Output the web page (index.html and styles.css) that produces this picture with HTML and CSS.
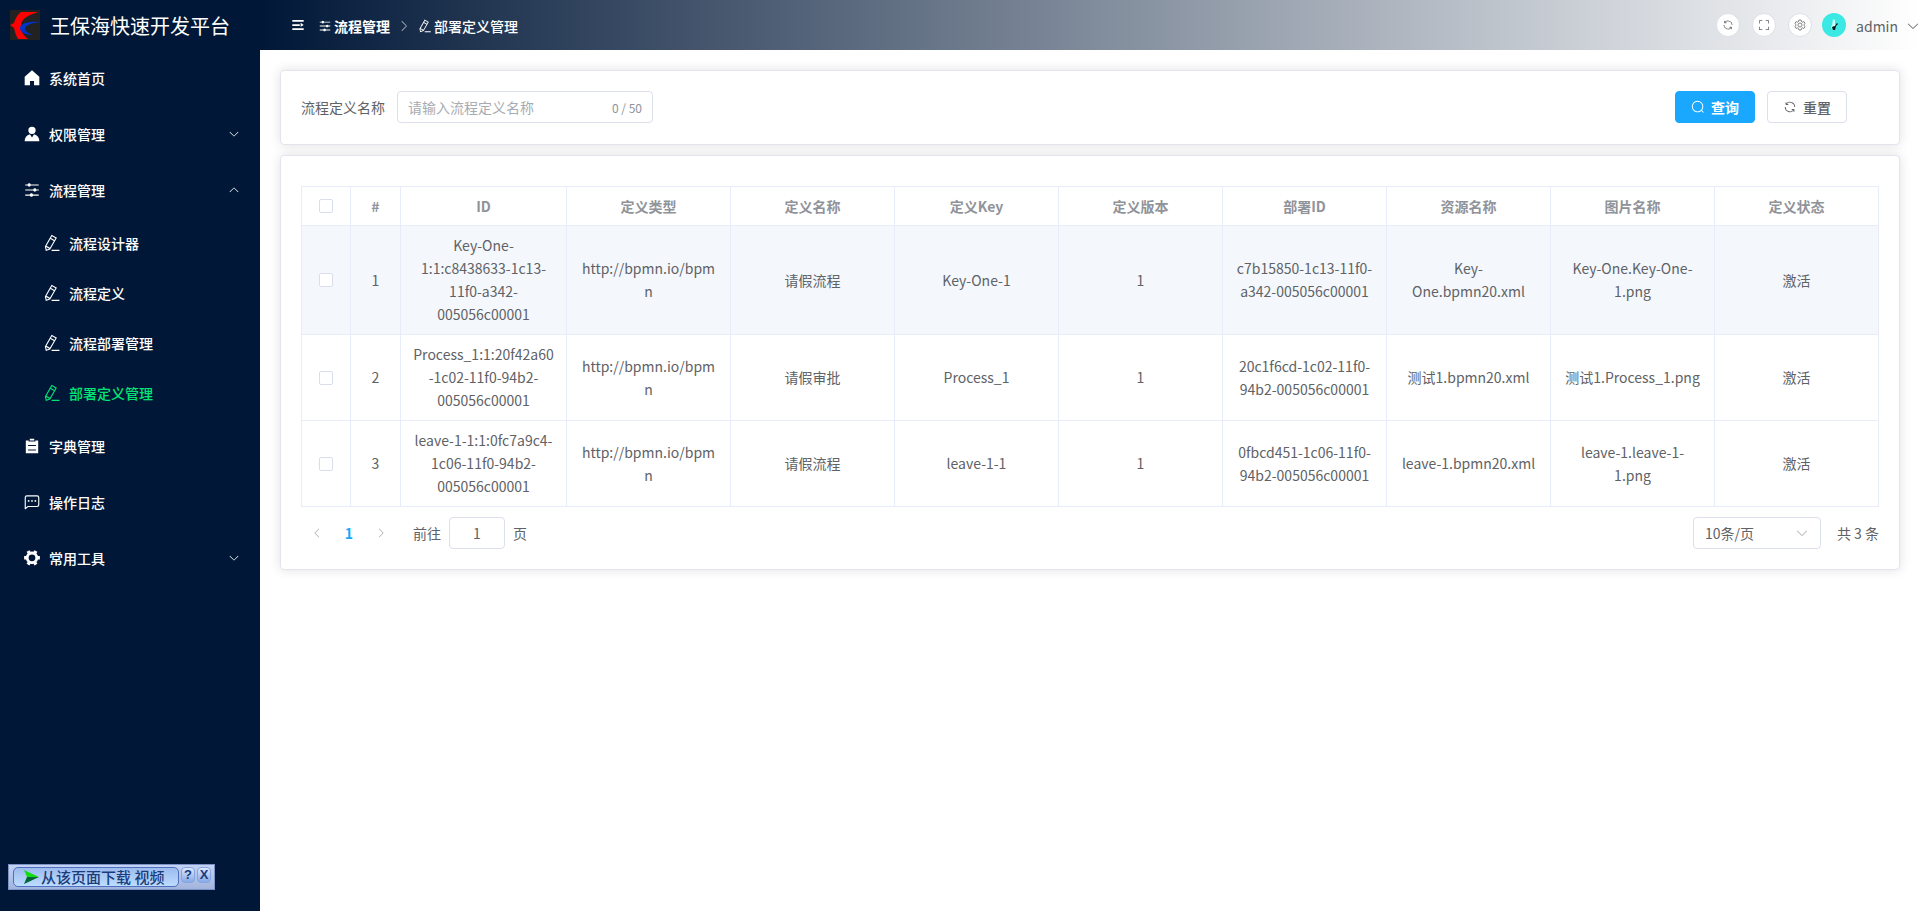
FILE: index.html
```html
<!DOCTYPE html>
<html lang="zh-CN">
<head>
<meta charset="utf-8">
<title>王保海快速开发平台</title>
<link rel="stylesheet" href="styles.css">
</head>
<body>
<svg class="defs" aria-hidden="true">
  <symbol id="house" viewBox="0 0 1024 1024"><path d="M512 72 96 440v490h300V680h232v250h300V440z"/></symbol>
  <symbol id="avatar-man" viewBox="0 0 1024 1024"><path d="M628.7 528.9A416 416 0 0 1 928 928H96a415.900 415.900 0 0 1 299.300-399.100L512 704l116.700-175.100zM720 304a208 208 0 1 1-416 0 208 208 0 0 1 416 0z"/></symbol>
  <symbol id="operation" viewBox="0 0 1024 1024"><path d="M389.440 768a96.064 96.064 0 0 1 181.120 0H896v64H570.560a96.064 96.064 0 0 1-181.120 0H128v-64h261.440zm192-288a96.064 96.064 0 0 1 181.120 0H896v64H762.560a96.064 96.064 0 0 1-181.120 0H128v-64h453.440zm-320-288a96.064 96.064 0 0 1 181.120 0H896v64H442.560a96.064 96.064 0 0 1-181.120 0H128v-64h133.440z"/></symbol>
  <symbol id="edit" viewBox="0 0 1024 1024"><path d="m199.040 672.640 193.984 112 224-387.968-193.920-112-224 388.032zm-23.872 60.160 32.896 148.288 144.896-45.696L175.168 732.800zM455.040 229.248l193.920 112 56.704-98.112-193.984-112-56.640 98.112zM104.320 708.800l384-665.024 304.768 175.936L409.152 884.800h.064l-248.448 78.336L104.320 708.800zm384 254.272v-64h448v64h-448z"/></symbol>
  <symbol id="list" viewBox="0 0 1024 1024"><path d="M704 192h160v736H160V192h160v64h384v-64zM288 512h448v-64H288v64zm0 256h448v-64H288v64zm96-576V96h256v96H384z"/></symbol>
  <symbol id="chat" viewBox="0 0 1024 1024"><path d="M273.536 736H800a64 64 0 0 0 64-64V256a64 64 0 0 0-64-64H224a64 64 0 0 0-64 64v570.880L273.536 736zM296 800 147.968 918.400A32 32 0 0 1 96 893.440V256a128 128 0 0 1 128-128h576a128 128 0 0 1 128 128v416a128 128 0 0 1-128 128H296z"/><path d="M512 499.200a51.200 51.200 0 1 1 0-102.400 51.200 51.200 0 0 1 0 102.400zm192 0a51.200 51.200 0 1 1 0-102.400 51.200 51.200 0 0 1 0 102.400zm-384 0a51.200 51.200 0 1 1 0-102.400 51.200 51.200 0 0 1 0 102.400z"/></symbol>
  <symbol id="tools" viewBox="0 0 1024 1024"><path d="M764.416 254.720a351.680 351.680 0 0 1 86.336 149.184H960v192.064H850.752a351.680 351.680 0 0 1-86.336 149.312l54.720 94.720-166.272 96-54.592-94.720a352.640 352.640 0 0 1-172.480 0L371.136 936l-166.272-96 54.720-94.720a351.680 351.680 0 0 1-86.336-149.312H64v-192h109.248a351.680 351.680 0 0 1 86.336-149.312L204.800 160l166.208-96h.192l54.656 94.592a352.640 352.640 0 0 1 172.480 0L652.800 64h.128L819.200 160l-54.720 94.720zM704 499.968a192 192 0 1 0-384 0 192 192 0 0 0 384 0z"/></symbol>
  <symbol id="down" viewBox="0 0 1024 1024"><path d="M831.872 340.864 512 652.672 192.128 340.864a30.592 30.592 0 0 0-42.752 0 29.120 29.120 0 0 0 0 41.600L489.664 714.240a32 32 0 0 0 44.672 0l340.288-331.712a29.120 29.120 0 0 0 0-41.728 30.592 30.592 0 0 0-42.752 0z"/></symbol>
  <symbol id="refresh" viewBox="0 0 1024 1024"><path d="M771.776 794.880A384 384 0 0 1 128 512h64a320 320 0 0 0 555.712 216.448H654.720a32 32 0 1 1 0-64h149.056a32 32 0 0 1 32 32v148.928a32 32 0 1 1-64 0v-50.560zM276.288 295.616h92.992a32 32 0 0 1 0 64H220.160a32 32 0 0 1-32-32V178.560a32 32 0 0 1 64 0v50.560A384 384 0 0 1 896.128 512h-64a320 320 0 0 0-555.776-216.384z"/></symbol>
  <symbol id="full" viewBox="0 0 1024 1024"><path d="m160 96.064 192 .192a32 32 0 0 1 0 64l-192-.192V352a32 32 0 0 1-64 0V96h64v.064zm0 831.872V928H96V672a32 32 0 1 1 64 0v191.936l192-.192a32 32 0 1 1 0 64l-192 .192zM864 96.064V96h64v256a32 32 0 1 1-64 0V160.064l-192 .192a32 32 0 1 1 0-64l192-.192zm0 831.872-192-.192a32 32 0 0 1 0-64l192 .192V672a32 32 0 1 1 64 0v256h-64v-.064z"/></symbol>
  <symbol id="gear" viewBox="0 0 24 24"><path fill="none" stroke="currentColor" stroke-width="1.500" stroke-linejoin="round" d="M9.800 2h4.400l.8 3.200 1.800 1 3.200-.9 2.200 3.800-2.400 2.300v1.200l2.400 2.300-2.200 3.800-3.200-.9-1.800 1-.8 3.200H9.800L9 18.800l-1.800-1-3.200.9-2.200-3.800 2.400-2.300v-1.200L1.800 9.100 4 5.300l3.200.9 1.800-1zM12 8a4 4 0 1 0 0 8 4 4 0 1 0 0-8z"/></symbol>
  <symbol id="search" viewBox="0 0 1024 1024"><path d="m795.904 750.720 124.992 124.928a32 32 0 0 1-45.248 45.248L750.656 795.904a416 416 0 1 1 45.248-45.248zM480 832a352 352 0 1 0 0-704 352 352 0 0 0 0 704z"/></symbol>
  <symbol id="expand" viewBox="0 0 1024 1024"><path d="M96 150h832v128H96V150zm0 298h544v128H96V448zm0 298h832v128H96V746zm608-394 224 160-224 128V352z"/></symbol>
</svg>
<div class="app">
  <aside class="sidebar">
    <div class="brand">
      <svg class="logo" viewBox="0 0 30 30"><rect width="30" height="30" fill="#222"/><path fill="#f00" d="M11 2h17l-8 3c-6 3-9 6-9 11 0 5 2 9 7 13H8C6 26 5 22 4 18l-4-3 4-2C5 9 8 4 11 2z"/><path fill="#03c" d="M30 12c-10-1-20 1-20 6 0 4 5 7 13 7-5-2-8-4-8-6 0-4 7-6 15-7z"/></svg>
      <span>王保海快速开发平台</span>
    </div>
    <nav class="menu">
      <a class="item" href="#"><svg class="icon"><use href="#house"/></svg>系统首页</a>
      <a class="item" href="#"><svg class="icon"><use href="#avatar-man"/></svg>权限管理<svg class="arrow"><use href="#down"/></svg></a>
      <a class="item" href="#"><svg class="icon"><use href="#operation"/></svg>流程管理<svg class="arrow up"><use href="#down"/></svg></a>
      <a class="item sub" href="#"><svg class="icon"><use href="#edit"/></svg>流程设计器</a>
      <a class="item sub" href="#"><svg class="icon"><use href="#edit"/></svg>流程定义</a>
      <a class="item sub" href="#"><svg class="icon"><use href="#edit"/></svg>流程部署管理</a>
      <a class="item sub active" href="#"><svg class="icon"><use href="#edit"/></svg>部署定义管理</a>
      <a class="item" href="#"><svg class="icon"><use href="#list"/></svg>字典管理</a>
      <a class="item" href="#"><svg class="icon"><use href="#chat"/></svg>操作日志</a>
      <a class="item" href="#"><svg class="icon"><use href="#tools"/></svg>常用工具<svg class="arrow"><use href="#down"/></svg></a>
    </nav>
    <div class="downloader">
      <button class="dl-main" type="button"><svg class="play" viewBox="0 0 15 14"><path fill="#1d1" d="M0 0l15 7H3z"/><path fill="#063" d="M0 14l15-7H3z"/></svg>从该页面下载 视频</button>
      <button class="dl-btn" type="button">?</button>
      <button class="dl-btn" type="button">X</button>
    </div>
  </aside>
  <div class="page">
    <header class="topbar">
      <button class="fold" type="button" aria-label="折叠菜单"><svg><use href="#expand"/></svg></button>
      <nav class="crumbs">
        <a class="crumb" href="#"><svg><use href="#operation"/></svg>流程管理</a>
        <svg class="sep"><use href="#down"/></svg>
        <span class="crumb last"><svg><use href="#edit"/></svg>部署定义管理</span>
      </nav>
      <div class="tools">
        <button class="round" type="button" aria-label="刷新"><svg><use href="#refresh"/></svg></button>
        <button class="round" type="button" aria-label="全屏"><svg><use href="#full"/></svg></button>
        <button class="round" type="button" aria-label="设置"><svg><use href="#gear"/></svg></button>
      </div>
      <svg class="avatar" viewBox="0 0 24 24"><circle cx="12" cy="12" r="12" fill="#3ae8e4"/><path fill="#c9fbf8" d="M11 6l2 1v6h-3zM9 13l2-1-1 5z"/><path fill="#111" d="M10 14l3-1 2-3 1 1-2 2-1 4h-2z"/></svg>
      <button class="account" type="button">admin<svg><use href="#down"/></svg></button>
    </header>
    <main class="content">
      <form class="card filter">
        <label for="name">流程定义名称</label>
        <div class="field"><input id="name" type="text" maxlength="50" placeholder="请输入流程定义名称"><span>0 / 50</span></div>
        <div class="actions">
          <button class="btn primary" type="button"><svg><use href="#search"/></svg>查询</button>
          <button class="btn" type="button"><svg><use href="#refresh"/></svg>重置</button>
        </div>
      </form>
      <section class="card">
        <table class="grid">
          <colgroup><col class="c-check"><col class="c-num"><col class="c-id"><col><col><col><col><col><col><col><col></colgroup>
          <thead><tr><th><input type="checkbox" aria-label="全选"></th><th>#</th><th>ID</th><th>定义类型</th><th>定义名称</th><th>定义Key</th><th>定义版本</th><th>部署ID</th><th>资源名称</th><th>图片名称</th><th>定义状态</th></tr></thead>
          <tbody>
            <tr class="hover"><td><input type="checkbox" aria-label="选择 1"></td><td>1</td><td>Key-One-1:1:c8438633-1c13-11f0-a342-005056c00001</td><td>http://bpmn.io/bpmn</td><td>请假流程</td><td>Key-One-1</td><td>1</td><td>c7b15850-1c13-11f0-a342-005056c00001</td><td>Key-One.bpmn20.xml</td><td>Key-One.Key-One-1.png</td><td>激活</td></tr>
            <tr><td><input type="checkbox" aria-label="选择 2"></td><td>2</td><td>Process_1:1:20f42a60-1c02-11f0-94b2-005056c00001</td><td>http://bpmn.io/bpmn</td><td>请假审批</td><td>Process_1</td><td>1</td><td>20c1f6cd-1c02-11f0-94b2-005056c00001</td><td>测试1.bpmn20.xml</td><td>测试1.Process_1.png</td><td>激活</td></tr>
            <tr><td><input type="checkbox" aria-label="选择 3"></td><td>3</td><td>leave-1-1:1:0fc7a9c4-1c06-11f0-94b2-005056c00001</td><td>http://bpmn.io/bpmn</td><td>请假流程</td><td>leave-1-1</td><td>1</td><td>0fbcd451-1c06-11f0-94b2-005056c00001</td><td>leave-1.bpmn20.xml</td><td>leave-1.leave-1-1.png</td><td>激活</td></tr>
          </tbody>
        </table>
        <div class="pager">
          <button class="pg prev" type="button" aria-label="上一页"><svg><use href="#down"/></svg></button>
          <button class="pg current" type="button">1</button>
          <button class="pg next" type="button" aria-label="下一页"><svg><use href="#down"/></svg></button>
          <label class="jump">前往<input type="text" value="1">页</label>
          <div class="size"><select aria-label="每页条数"><option>10条/页</option></select><svg><use href="#down"/></svg></div>
          <span>共 3 条</span>
        </div>
      </section>
    </main>
  </div>
</div>
</body>
</html>
```
FILE: styles.css
```css
* { box-sizing: border-box; }
body {
  margin: 0;
  font: 14px/23px "Noto Sans CJK SC", sans-serif;
  color: #606266;
  background: #fff;
}
button, input, select { font: inherit; color: inherit; margin: 0; }
button { padding: 0; border: 0; background: none; }
a { color: inherit; text-decoration: none; }
svg { fill: currentColor; flex: none; width: 14px; height: 14px; }
.defs { position: absolute; width: 0; height: 0; }

.app { display: flex; min-height: 100vh; }

.sidebar {
  display: flex;
  flex-direction: column;
  flex: none;
  width: 260px;
  color: #fff;
  background: #001737;
}
.brand {
  display: flex;
  align-items: center;
  gap: 10px;
  height: 50px;
  padding: 0 10px;
  font-size: 20px;
}
.logo { width: 30px; height: 30px; }
.item {
  display: flex;
  align-items: center;
  height: 56px;
  padding: 0 20px;
  font-weight: 500;
}
.item .icon { width: 18px; height: 18px; margin: 0 8px 0 3px; }
.item .arrow { width: 12px; height: 12px; margin-left: auto; }
.item .up { transform: rotate(180deg); }
.sub { height: 50px; padding-left: 40px; }
.active { color: #00e676; }

.downloader {
  display: flex;
  align-items: flex-start;
  gap: 2px;
  width: 207px;
  height: 26px;
  margin: auto 0 21px 8px;
  padding: 2px 1px 3px 4px;
  color: #1c3c78;
  border: 1px solid #7d93c8;
  background: linear-gradient(#c3d3f3, #a3b4dc);
}
.dl-main {
  display: flex;
  align-items: center;
  gap: 2px;
  width: 166px;
  height: 20px;
  padding-left: 10px;
  font-size: 15px;
  font-weight: 500;
  line-height: 16px;
  white-space: nowrap;
  border: 1px solid #4f6fc0;
  border-radius: 5px;
  background: linear-gradient(#9dbbee, #bcdcff);
}
.play { width: 15px; height: 14px; }
.dl-btn {
  width: 14px;
  height: 16px;
  font: bold 13px/14px "Liberation Sans", sans-serif;
  border: 1px solid #86a4de;
  border-radius: 4px;
  background: linear-gradient(#dce8ff, #86a9e6);
}

.page { flex: 1; min-width: 0; }
.topbar {
  display: flex;
  align-items: center;
  height: 50px;
  padding-left: 31px;
  color: #fff;
  background: linear-gradient(to right, #001737, #fff);
}
.fold { display: flex; margin-right: 13px; }
.crumbs { display: flex; align-items: center; flex: 1; padding-top: 2px; }
.crumb { display: flex; align-items: center; font-weight: 700; }
.crumb svg { margin-right: 2px; }
.last { font-weight: 500; }
.crumbs .sep { margin: 0 7px; transform: rotate(-90deg); color: #a8abb2; }
.tools { display: flex; gap: 12px; color: #606266; }
.round {
  display: flex;
  align-items: center;
  justify-content: center;
  width: 24px;
  height: 24px;
  border: 1px solid #dcdfe6;
  border-radius: 50%;
  background: #fff;
}
.round svg { width: 12px; height: 12px; }
.avatar { width: 24px; height: 24px; margin: 0 10px; }
.account { display: flex; align-items: center; gap: 8px; padding-top: 2px; color: #606266; }

.content { display: grid; gap: 10px; padding: 20px; }
.card {
  min-width: 0;
  padding: 20px;
  border: 1px solid #e2e5f0;
  border-radius: 4px;
  background: #fff;
  box-shadow: 0 0 12px rgba(0, 0, 0, .12);
}
.filter { display: flex; align-items: flex-start; gap: 12px; min-height: 75px; }
.filter label { line-height: 32px; }
.field {
  display: flex;
  align-items: center;
  width: 256px;
  height: 32px;
  padding: 0 10px;
  border: 1px solid #dcdfec;
  border-radius: 4px;
}
.field input { flex: 1; min-width: 0; padding: 0; border: 0; outline: 0; background: none; }
.field input::placeholder { color: #a8abb2; opacity: 1; }
.field span { font-size: 12px; color: #909399; }
.actions { display: flex; gap: 12px; margin: 0 32px 0 auto; }
.btn {
  display: flex;
  align-items: center;
  justify-content: center;
  gap: 6px;
  width: 80px;
  height: 32px;
  font-weight: 500;
  border: 1px solid #dcdfec;
  border-radius: 4px;
  background: #fff;
}
.primary { font-weight: 700; color: #fff; border-color: #1aa8ff; background: #1aa8ff; }

.grid {
  width: 100%;
  margin-top: 10px;
  table-layout: fixed;
  border-collapse: separate;
  border-spacing: 0;
  border: solid #e8ecfa;
  border-width: 1px 0 0 1px;
}
.c-check { width: 49px; }
.c-num { width: 50px; }
.c-id { width: 166px; }
.grid th, .grid td {
  padding: 8px 12px;
  text-align: center;
  vertical-align: middle;
  overflow-wrap: break-word;
  border: solid #e8ecfa;
  border-width: 0 1px 1px 0;
}
.grid th { line-height: 22px; font-weight: 700; color: #909399; }
.hover td { background: #f4f8fd; }
input[type="checkbox"] {
  display: block;
  appearance: none;
  width: 14px;
  height: 14px;
  margin: 0 auto;
  border: 1px solid #dadded;
  border-radius: 2px;
  background: #fff;
}

.pager { display: flex; align-items: center; margin-top: 10px; }
.pg { display: flex; align-items: center; justify-content: center; width: 32px; height: 32px; color: #a8abb2; }
.pg svg { width: 12px; height: 12px; }
.prev svg { transform: rotate(90deg); }
.next svg { transform: rotate(-90deg); }
.pager .current { font-weight: 700; color: #1aa8ff; }
.jump { display: flex; align-items: center; gap: 8px; margin-left: 16px; }
.jump input {
  width: 56px;
  height: 32px;
  padding: 0;
  text-align: center;
  border: 1px solid #dcdfec;
  border-radius: 4px;
}
.size { display: grid; align-items: center; width: 128px; margin: 0 16px 0 auto; }
.size select {
  grid-area: 1 / 1;
  height: 32px;
  padding: 0 11px;
  appearance: none;
  border: 1px solid #dcdfec;
  border-radius: 4px;
  background: #fff;
}
.size svg { grid-area: 1 / 1; justify-self: end; margin-right: 12px; color: #a8abb2; pointer-events: none; }
```
